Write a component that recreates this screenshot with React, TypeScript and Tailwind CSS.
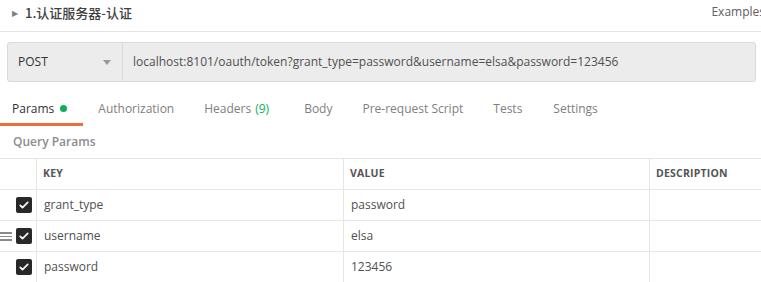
const params = [
  { key: "grant_type", value: "password" },
  { key: "username", value: "elsa", drag: true },
  { key: "password", value: "123456" },
];

const tabs = [
  { label: "Authorization", ml: "ml-[15px]" },
  { label: "Headers", ml: "ml-[30px]", count: "(9)" },
  { label: "Body", ml: "ml-[35px]" },
  { label: "Pre-request Script", ml: "ml-[30px]" },
  { label: "Tests", ml: "ml-[30px]" },
  { label: "Settings", ml: "ml-[31px]" },
];

function Checkbox() {
  return (
    <span className="flex h-4 w-4 items-center justify-center rounded-[2px] bg-[#282828]">
      <svg viewBox="0 0 16 16" className="h-3 w-3" fill="none">
        <path
          d="M3 8.5l3 3 7-7"
          stroke="#fff"
          strokeWidth="2.2"
          strokeLinecap="round"
          strokeLinejoin="round"
        />
      </svg>
    </span>
  );
}

export default function App() {
  return (
    <div className="h-[282px] w-[761px] overflow-hidden bg-white font-['Open_Sans',sans-serif] text-[12px] text-[#505050]">
      <div className="flex h-[32px] items-start justify-between border-b border-[#e4e4e4] pt-[3px]">
        <div className="flex items-center pl-[12px]">
          <span className="text-[8px] text-[#808080]">▶</span>
          <span className="ml-[7px] font-['Noto_Sans_CJK_SC','Open_Sans',sans-serif] text-[13px] font-medium text-[#404040]">
            1.认证服务器-认证
          </span>
        </div>
        <span className="mr-[-4px] whitespace-nowrap text-[12px] leading-[18px] text-[#606060]">
          Examples
        </span>
      </div>

      <div className="mt-[10px] ml-[7px] mr-[5px] flex h-[40px] rounded-[3px] border border-[#dadada] bg-[#ececec]">
        <div className="flex w-[115px] items-center justify-between border-r border-[#dadada] pl-[10px] pr-[11px]">
          <span className="text-[12px] text-[#333]">POST</span>
          <svg viewBox="0 0 8 5" className="h-[5px] w-[8px]">
            <path d="M0 0h8L4 5z" fill="#9a9a9a" />
          </svg>
        </div>
        <div className="flex items-center pl-[10px] text-[12px] text-[#505050]">
          localhost:8101/oauth/token?grant_type=password&amp;username=elsa&amp;password=123456
        </div>
      </div>

      <div className="mt-[11px] flex h-[33px] items-stretch">
        <div className="flex items-center border-b-[3px] border-[#f26b3a] pl-[12px] pr-[16px] pt-[1px]">
          <span className="text-[#333]">Params</span>
          <span className="ml-[6px] h-[7px] w-[7px] rounded-full bg-[#0cb157]" />
        </div>
        {tabs.map((t) => (
          <div
            key={t.label}
            className={`flex items-center border-b-[3px] border-transparent pt-[1px] ${t.ml} text-[#808080]`}
          >
            {t.label}
            {t.count && <span className="ml-[4px] text-[#0cb157]">{t.count}</span>}
          </div>
        ))}
      </div>

      <div className="flex h-[32px] items-center pl-[13px] text-[12px] font-semibold text-[#8c8c8c]">
        Query Params
      </div>

      <div className="border-t border-[#e6e6e6]">
        <div className="flex h-[31px] border-b border-[#e6e6e6] text-[10.5px] font-bold tracking-[0.2px] text-[#555]">
          <div className="w-[37px] border-r border-[#e6e6e6]" />
          <div className="flex w-[307px] items-center border-r border-[#e6e6e6] pl-[6px]">KEY</div>
          <div className="flex w-[306px] items-center border-r border-[#e6e6e6] pl-[6px]">VALUE</div>
          <div className="flex flex-1 items-center pl-[6px]">DESCRIPTION</div>
        </div>
        {params.map((p) => (
          <div key={p.key} className="flex h-[31px] border-b border-[#e6e6e6]">
            <div className="relative flex w-[37px] items-center justify-end border-r border-[#e6e6e6] pr-[4px]">
              {p.drag && (
                <span className="absolute left-0 top-[11px] flex w-[12px] flex-col gap-[2px]">
                  <span className="h-[1.5px] bg-[#8a8a8a]" />
                  <span className="h-[1.5px] bg-[#8a8a8a]" />
                  <span className="h-[1.5px] bg-[#8a8a8a]" />
                </span>
              )}
              <Checkbox />
            </div>
            <div className="flex w-[307px] items-center border-r border-[#e6e6e6] pl-[7px]">{p.key}</div>
            <div className="flex w-[306px] items-center border-r border-[#e6e6e6] pl-[7px]">{p.value}</div>
            <div className="flex-1" />
          </div>
        ))}
      </div>
    </div>
  );
}
